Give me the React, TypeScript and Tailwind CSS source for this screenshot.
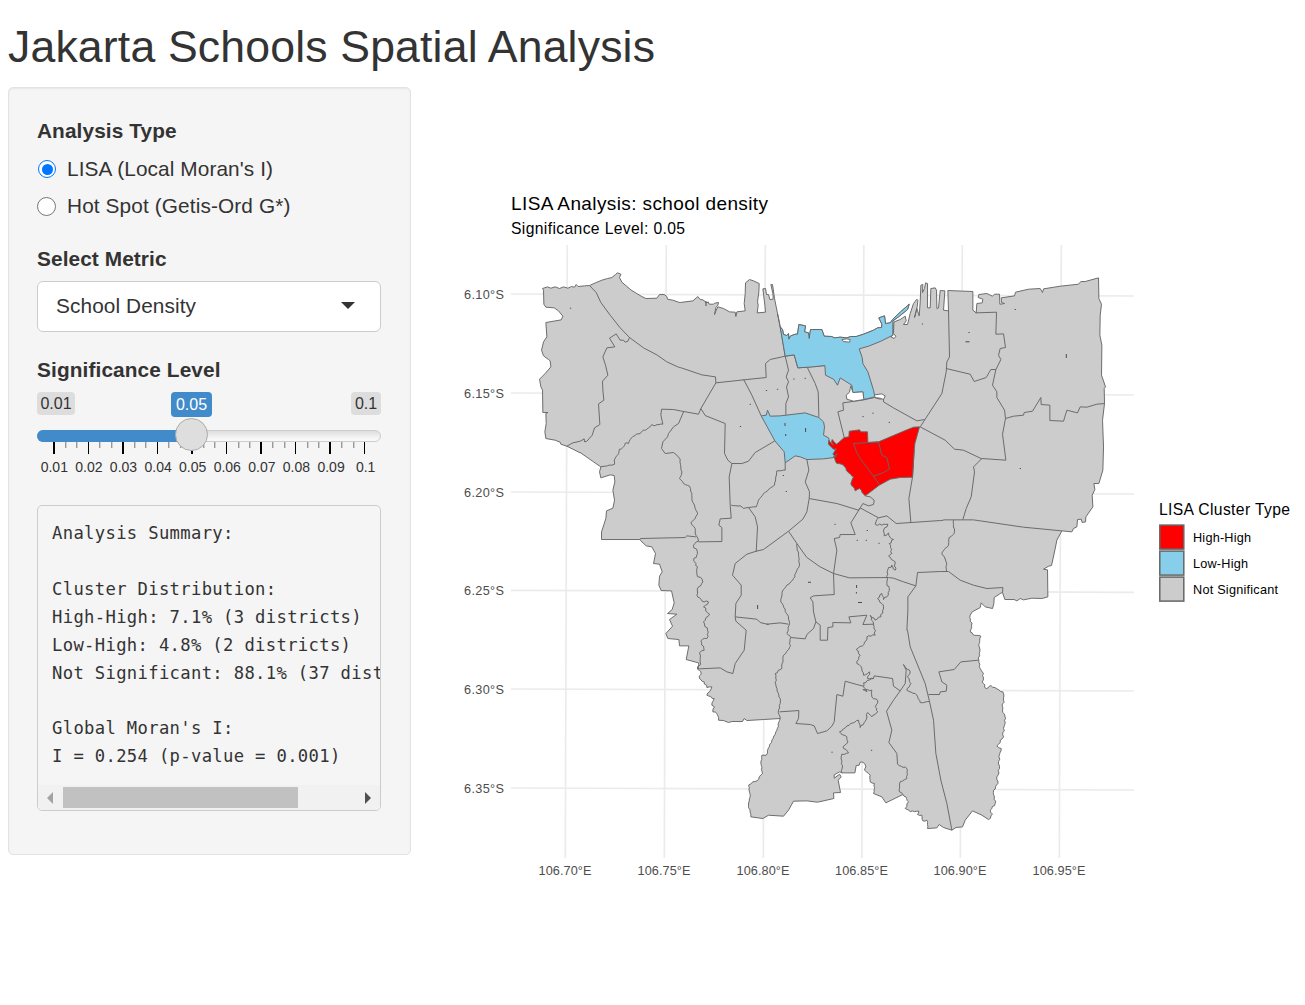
import React from "react";

/** Converts "x,y x,y" surveyed on a 3x sheet with the given origin to map points. */
type Pt = [number, number];
const sheet = (ox: number, oy: number, s: string): Pt[] =>
  s.trim().split(/\s+/).map((p) => {
    const [x, y] = p.split(",").map(Number);
    return [ox + x / 3, oy + y / 3];
  });
const NW = (s: string) => sheet(530.2, 260.2, s);
const N = (s: string) => sheet(680.2, 260.2, s);
const NM = (s: string) => sheet(820.2, 260.2, s);
const NE = (s: string) => sheet(960.2, 260.2, s);
const W = (s: string) => sheet(580.2, 450.2, s);
const C = (s: string) => sheet(760.2, 450.2, s);
const E = (s: string) => sheet(890.2, 500.2, s);
const S = (s: string) => sheet(730.2, 640.2, s);

const d = (pts: Pt[]) => "M" + pts.map((p) => p[0].toFixed(2) + " " + p[1].toFixed(2)).join("L");

/** Adds small bends along a line, for rivers and ragged borders. */
const bends = (pts: Pt[], amp: number): Pt[] => {
  const out: Pt[] = [pts[0]];
  let k = 0;
  for (let i = 1; i < pts.length; i++) {
    const [x0, y0] = pts[i - 1];
    const [x1, y1] = pts[i];
    const len = Math.hypot(x1 - x0, y1 - y0) || 1;
    const n = Math.max(1, Math.round(len / 2.2));
    for (let j = 1; j < n; j++) {
      k++;
      const o = amp * Math.sin(k * 2.3 + Math.cos(k * 1.7) * 2);
      out.push([x0 + ((x1 - x0) * j) / n - ((y1 - y0) / len) * o, y0 + ((y1 - y0) * j) / n + ((x1 - x0) / len) * o]);
    }
    out.push(pts[i]);
  }
  return out;
};

const outline: Pt[] = [
  ...NW("37,85 52,80 62,84 75,80 88,85 100,80 113,84 124,79 133,81 138,73 144,79 163,77 178,76 198,67 215,60 232,55 245,52 256,43 262,38 272,42 268,52 275,66 288,77 302,89 318,99 333,108 347,115 380,114 388,103 402,103 410,109 412,117 428,120 445,126"),
  ...N("0,127 38,122 53,109 60,118 68,119 80,128 84,125 87,132 100,132 103,129 115,127 113,135 107,142 103,163 108,150 113,140 130,145 148,155 165,156 167,169 170,155 195,152 192,130 195,100 196,68 208,58 220,62 237,70 236,95 232,125 234,135 231,158 256,156 254,135 248,86 256,85 259,103 265,103 269,118 279,117 278,100 272,73 277,73 283,115 292,160 300,200 307,208 310,223 320,226 325,220 326,237 330,228 345,222 352,222 356,193 376,197 373,215 385,218 387,235 391,208 425,208 432,228 455,229 462,233 480,231"),
  ...NM("80,233 92,229 108,229 130,222 160,210 172,203 184,202 185,192 176,173 193,167 196,190 210,188 218,177 240,156 267,132 262,148 235,170 218,182 218,225 212,230 222,235 227,228 220,220 221,190 222,185 240,178 255,168 258,182 250,193 262,193 270,160 280,130 290,117 293,120 291,140 283,172 290,145 297,167 300,125 302,75 308,73 307,97 313,85 316,68 322,70 322,143 330,143 332,85 345,83 349,90 350,145 355,143 360,91 374,92 370,150 385,152 383,91"),
  ...NE("38,94 38,150 48,158 50,130 66,128 68,117 54,112 56,103 80,100 97,108 103,102 118,102 119,132 133,130 124,127 123,113 163,107 166,96 205,87 240,85 247,97 250,86 300,78 355,72 362,64 375,64 415,53 416,115 424,132 420,165 419,225 425,255 424,345 436,380 432,385 433,430 427,480 430,560 428,630 416,670 401,670 404,688 396,705 398,740 377,770 376,785 366,787 363,777 352,778 350,800 340,805 335,815"),
  ...E("515,92 500,120 494,150 484,196 475,198 460,207 472,209 473,290 455,295 425,294 400,299 390,295 380,302 372,298 344,298 337,277 330,280 312,292 311,310 307,325 285,320 273,308 270,322 246,335"),
  ...bends([
    ...E("240,345 244,375 240,395 248,403 272,408 267,440 266,480"),
    ...S("750,85 760,100 756,125 768,145 782,136 800,146 818,155 820,180 817,210 826,235 820,265 820,290 800,317 813,325 806,350 808,385 800,410 803,430 790,450 795,490 780,510 787,522 775,538"),
  ], 0.8),
  ...S("755,525 727,512 705,540 697,560 677,562 665,570 640,562 627,553 620,563 592,565"),
  ...bends(S("592,565 590,540 578,542 575,525 562,523 566,513 540,514 525,505 535,485 527,470 518,463"), 0.6),
  ...S("467,488 455,470 430,460"),
  ...bends(S("430,460 433,430 420,425 420,405 403,390 407,380 400,367 390,366 387,375 378,376"), 0.5),
  ...S("374,398 335,398 328,395 312,404 312,414 328,402 333,410 324,420 331,457 310,458 311,475 262,486 230,482 190,483 175,510 160,528 115,525 98,535 62,530"),
  ...bends(S("62,530 55,495 60,470 55,435 68,425 80,422 97,400 92,370 95,345 108,345 125,300 140,270 150,235"), 0.5),
  ...W("550,808 500,811 492,805 487,814 455,814 445,817 430,811 415,810"),
  ...bends(W("415,810 410,790 398,785 403,770 395,765 402,745 380,735 395,710 380,712 372,695 358,685 362,665 352,657 355,638"), 0.8),
  ...W("318,628 326,587 298,587 296,568 263,565 257,550 277,528 268,508 290,492 262,490 276,478 282,458 274,422 243,421 236,405 238,378 246,365 238,342 220,340 226,310 215,290 198,287 182,272 180,268 64,268 64,245 77,205 79,182 98,174 103,150 98,120 104,95 102,76 90,74 62,83 58,65 62,50 40,35 0,7"),
  ...NW("150,578 110,558 92,552 90,546 75,540 47,535 44,515 48,490 47,460 53,457 38,457 37,390 32,380 28,357 45,340 62,320 60,302 55,298 40,287 34,270 40,245 50,230 47,187 93,179 98,168 85,152 72,143 47,141 41,132 40,90"),
];

const borders: Pt[][] = [
  [...NW("178,76 198,97 212,127 240,165 270,203 298,232 340,263 380,284 410,305 445,321"), ...N("0,322 65,344 106,350 107,368")],
  NW("298,232 293,243 285,246 280,240 270,240 258,221 238,234 254,260 230,263 218,290 226,315 233,345 217,363 218,390 221,420 205,431 209,493 193,503 186,525 170,543 163,545 162,536 150,543 128,548 110,558"),
  NW("394,447 392,465 398,492"),
  [...NW("394,447 430,448"), ...N("0,452 55,462 62,445 107,368")],
  bends([...NW("398,492 375,496 365,493 350,507 340,510 330,520 318,522 300,538 295,550 285,549 278,562 268,567 262,585 252,600"), ...W("103,42 95,45 75,48 62,50")], 0.6),
  NW("460,455 445,490 430,500 415,520 412,530 398,545 394,565 405,580 430,577 440,585 450,597"),
  bends(W("300,27 302,50 305,65 298,85 310,100 328,108 335,130 337,155 345,175 352,192 345,205 332,217 345,235 347,255 355,273"), 0.5),
  bends(W("355,273 340,285 352,310 340,330 352,350 350,372 368,395 355,410 350,435 372,455 385,455 370,470 388,492 370,515 382,540 380,565 362,572 372,600 358,608 360,635 355,657"), 1),
  [...N("62,445 75,466 135,490 133,580"), ...W("443,30 455,40 447,80 450,165 453,204 420,206 416,225 425,232 425,274 355,275")],
  N("107,368 190,359 258,352 256,310 270,298 315,288 342,284 353,323 434,316"),
  N("190,357 215,405 243,467"),
  N("292,160 300,200 307,240 315,288 325,330 318,350 325,365 319,380 325,410 317,430 317,466"),
  N("382,323 405,370 414,395 416,470"),
  [...N("284,542 225,577"), ...W("505,33 485,40 455,40")],
  bends(W("453,165 480,167 490,175 505,172 528,170 535,150 550,130 583,105 590,62 615,60"), 0.3),
  W("180,265 315,262 320,257 347,260"),
  W("505,172 525,200 532,230 528,305"),
  [...C("147,145 140,185 128,207 85,243 10,298"), ...W("528,303 500,312 465,340 457,375 483,405 483,435 467,460 465,500")],
  [...W("465,500 530,507 540,517 565,523"), ...C("20,522 60,518 85,522")],
  W("465,500 467,513 498,540 492,600 465,640 458,670 440,665 420,653 357,656"),
  C("75,38 75,60"),
  C("140,28 146,60 135,95 148,125 147,145"),
  C("147,145 230,160 295,180 300,173 355,203 380,197 408,220 540,211"),
  C("300,173 272,218 285,253 240,253 238,262 222,265 230,300 220,370 222,433 160,437 150,443 158,455 160,485 167,515 180,525 180,570 202,570 203,532 218,530 218,517 272,518 266,500 320,495 308,523 340,522"),
  C("85,243 110,280 140,322 180,350 220,370 268,383 385,382 400,384 430,395 467,407 472,367 540,364"),
  bends(C("110,280 118,345 100,385 68,420 62,455 85,500 88,520 80,550 92,562"), 0.5),
  C("92,562 135,566 140,553 160,535 167,515"),
  bends([...C("92,562 88,592"), ...S("160,45 155,85 135,100 138,140 150,175 145,210 150,235")], 0.7),
  [...C("467,407 443,440 443,480 440,540"), ...E("52,390 60,440 105,550"), ...S("598,184 610,240 617,340 632,420 650,490 665,570")],
  bends([
    ...C("355,203 345,222 365,225 383,222 370,240 372,257 385,248 390,262 400,268 387,280 395,310 385,318 405,335 405,360 395,345 383,358 380,400 387,415 380,440 370,448 365,430 352,445 365,460 370,470 362,500 345,510 330,495 340,522 345,555 320,560 312,582"),
    ...S("378,28 390,45 380,70 395,85 400,105 418,95 412,115 430,115"),
  ], 0.9),
  C("462,0 457,80 446,145 452,217"),
  C("330,140 342,150 340,163 325,167 308,160 300,173"),
  C("315,137 330,140"),
  NM("72,532 53,455 70,450 68,428 125,420 163,412 180,417 190,413"),
  NM("190,413 190,425 220,443 290,482 313,478"),
  NM("385,152 388,290 380,305 378,335 365,400 300,500 375,540 403,567 430,570 485,596"),
  [...NM("378,325 420,335"), ...NE("30,342 42,364 78,352 92,328 107,328")],
  NE("46,158 109,156 107,222 130,221 136,262 120,265 115,285 122,298 107,328 97,375 110,395 110,412 133,450 136,475 127,522 137,600 65,595"),
  NE("65,595 40,620 43,635 33,710 18,745 8,778"),
  NE("136,475 160,468 190,465 192,457 217,453 242,412 243,433 269,435 269,481 310,483 320,450 352,458 360,440 380,441 410,432 433,430"),
  E("150,62 162,59 250,59 400,81 515,92"),
  bends(E("190,60 192,100 177,112 175,135 155,158 168,185 169,213"), 0.5),
  E("150,214 175,214 210,240 250,255 290,265 338,262 337,277"),
  E("265,480 212,485 192,508 146,515 155,545 170,555 168,573 150,575 148,583 115,583"),
  S("520,73 528,90 525,130 510,152 490,180 469,213 485,270 476,307 500,340 502,372"),
  bends(S("502,372 530,385 530,415 510,425 508,455 518,463"), 0.6),
  bends(S("520,73 540,95 532,110 542,130 530,150 555,160 570,187 598,184"), 0.6),
  S("430,115 432,107 487,115 490,138 510,152"),
  S("400,138 380,133 345,123 338,168 320,163 312,245 305,258 290,272 262,280 252,257 240,253 197,250 205,235 206,211 148,215"),
  bends(S("430,115 400,128 400,140 410,155 398,148 425,150 425,170 443,182 435,200 443,215 425,230 412,217 405,243 390,262 385,240 350,257 328,275 350,290 353,305 338,320 355,338 335,342 335,398"), 0.7),
];

const lowHigh: Pt[][] = [
  [
    ...N("300,200 307,208 310,223 320,226 325,220 326,237 330,228 345,222 352,222 356,193 376,197 373,215 385,218 387,235 391,208 425,208 432,228 455,229 462,233 480,231"),
    ...NM("80,233 92,229 108,229 130,222 160,210 172,203 184,202 185,192 176,173 193,167 196,190 210,188 218,177 240,156 267,132 262,148 235,170 218,182 218,225 180,244 145,258 117,266 126,292 128,310 143,335 160,390 164,410 131,418 128,395 98,397 95,375 60,353 52,375 40,357 16,345 14,316"),
    ...N("400,320 353,323 342,284 315,288"),
  ],
  [
    ...N("243,467 258,465 262,450 270,468 300,467 375,458 416,472 430,485 433,500 430,525 445,533 450,550 460,565 470,575 460,590"),
    ...C("222,22 190,26 140,28 120,20 105,17 75,38 72,5"),
    ...N("284,542"),
  ],
];

const highHigh: Pt[] = [
  ...NM("298,500 280,501 260,509 175,545 143,547 142,515 122,515 118,509 87,513 86,530 72,532 50,552 44,548 36,538 34,545 40,555 25,541 25,552 40,567 48,566 38,582 47,590"),
  ...bends(C("230,10 222,20 230,40 250,45 262,65 280,80 272,100 285,122 298,115 315,137"), 0.5),
  ...C("357,105 390,87 420,82 457,81 462,0"),
  ...NM("284,550"),
];
const highInner: Pt[][] = [
  [...NM("100,550 110,578"), ...C("300,25 340,78 357,103")],
  NM("100,550 143,547 175,545"),
  [...NM("175,545 185,585 200,592"), ...C("388,57 370,67 340,78")],
];

const waters: Pt[][] = [
  NM("92,377 98,397 128,395 131,418 100,423 80,417 78,405 88,396 90,385"),
  NM("163,404 185,401 195,407 190,418 180,414 164,412"),
  NM("65,238 80,236 90,238 88,246 70,244"),
];

const specks = "570.5,308.2 750.3,404.3 740.4,426.5 766.4,390.5 777.5,389.3 793.8,379 805.2,378.3 863,416.6 873,413.2 889.3,422.4 922.4,324 969,332.5 1015.3,309.5 1020.3,468.5 783.3,475.5 786.3,491.5 835,524.3 867.3,530.5 857.3,540.3 866.3,540.3 879,543.3 871.5,750.3 832,752.2".split(" ");
const marks = ["M785 423v3", "M785.7 434v2", "M805.6 428v4", "M757.6 605v4", "M856.6 585v3", "M856.4 592v1.5", "M858 602.5h4", "M808 582.3h3", "M965.5 341.8h4", "M1066.3 354v4", "M706 301v5"];

const lats = [["6.10°S", 294], ["6.15°S", 393], ["6.20°S", 492], ["6.25°S", 590.3], ["6.30°S", 689], ["6.35°S", 788]] as const;
const lons = [["106.70°E", 565], ["106.75°E", 664], ["106.80°E", 763], ["106.85°E", 861.5], ["106.90°E", 960], ["106.95°E", 1059]] as const;
const legend = [["High-High", "#ff0000", 58], ["Low-High", "#87ceeb", 55], ["Not Significant", "#cccccc", 85]] as const;

function LisaMap() {
  return (
    <svg className="block h-[800px] w-[855px] font-['Liberation_Sans',sans-serif]" viewBox="450 87 855 800">
      <text x="511" y="210" fontSize="19" textLength="257">LISA Analysis: school density</text>
      <text x="511" y="234" fontSize="15.7" textLength="174">Significance Level: 0.05</text>
      <g stroke="#ebebeb" strokeWidth="1.7">
        {lats.map(([t, y]) => <path key={t} d={`M511 ${y}L1134 ${y + 2}`} />)}
        {lons.map(([t, x]) => <path key={t} d={`M${x + 2.3} 245L${x + 0.3} 858`} />)}
      </g>
      <g fontSize="12.7" fill="#4d4d4d">
        {lats.map(([t, y]) => <text key={t} x="464" y={y + 5} textLength="40">{t}</text>)}
        {lons.map(([t, x]) => <text key={t} x={x - 26.5} y="875" textLength="53">{t}</text>)}
      </g>
      <g stroke="#666666" strokeWidth="0.95" strokeLinejoin="round" fill="none">
        <path d={d(outline) + "Z"} fill="#cccccc" />
        {borders.map((b, i) => <path key={i} d={d(b)} />)}
        {lowHigh.map((b, i) => <path key={i} d={d(b) + "Z"} fill="#87ceeb" />)}
        <path d={d(highHigh) + "Z"} fill="#ff0000" />
        {highInner.map((b, i) => <path key={i} d={d(b)} />)}
        {waters.map((b, i) => <path key={i} d={d(b) + "Z"} fill="#ffffff" />)}
        {marks.map((m) => <path key={m} d={m} stroke="#444444" />)}
      </g>
      {specks.map((p) => {
        const [x, y] = p.split(",").map(Number);
        return <rect key={p} x={x - 0.6} y={y - 0.5} width="1.3" height="1" fill="#555555" />;
      })}
      <text x="1159" y="515" fontSize="15.7" textLength="131">LISA Cluster Type</text>
      {legend.map(([t, c, w], i) => (
        <g key={t}>
          <rect x="1159.8" y={525.1 + i * 26} width="24" height="24" fill={c} stroke="#666666" strokeWidth="1.5" />
          <text x="1193" y={542 + i * 26} fontSize="12.7" textLength={w}>{t}</text>
        </g>
      ))}
    </svg>
  );
}

const ticks = ["0.01", "0.02", "0.03", "0.04", "0.05", "0.06", "0.07", "0.08", "0.09", "0.1"];

function Slider() {
  return (
    <div className="relative h-[84px] w-[344px]">
      <div className="flex h-6 justify-between text-[16px] leading-[24px]">
        <span className="h-[23px] w-[38px] rounded bg-[#dddddd] text-center">0.01</span>
        <span className="h-[23px] w-[30px] rounded bg-[#dddddd] text-center">0.1</span>
      </div>
      <div className="mt-[14px] h-3 rounded-full border border-[#cccccc] bg-gradient-to-b from-[#dedede] to-[#f8f8f8] to-80%" />
      <svg className="block h-3 w-[344px]" viewBox="0 0 344 12">
        {Array.from({ length: 28 }, (_, i) => {
          const x = 17 + i * 11.52;
          return i % 3 === 0
            ? <rect key={i} x={Math.floor(x - 0.5)} y="0" width={i % 2 ? 1 : 2} height="12" fill="#000" />
            : <rect key={i} x={Math.floor(x - 0.3)} y="0" width="1.4" height="6" fill="#999" />;
        })}
      </svg>
      <div className="mt-[4px] flex w-[346px] text-[14px] leading-[18px]">
        {ticks.map((t) => <span key={t} className="w-[34.6px] shrink-0 text-center">{t}</span>)}
      </div>
      <div className="absolute left-0 top-[38px] h-3 w-[150px] rounded-l-full bg-[#428bca]" />
      <div className="absolute left-[134px] top-0 h-[25px] w-[41px] rounded bg-[#428bca] text-center text-[16px] leading-[25px] text-white">0.05</div>
      <div className="absolute left-[138px] top-[26px] h-[33px] w-[33px] rounded-full border border-[#ababab] bg-[#dedede]" />
    </div>
  );
}

const summary = `Analysis Summary:

Cluster Distribution:
High-High: 7.1% (3 districts)
Low-High: 4.8% (2 districts)
Not Significant: 88.1% (37 districts)

Global Moran's I:
I = 0.254 (p-value = 0.001)`;

export default function App() {
  return (
    <div className="h-[1005px] w-[1305px] overflow-hidden bg-white font-['Liberation_Sans',sans-serif] text-[#333333]">
      <h1 className="ml-2 h-[87px] whitespace-nowrap pt-[22px] text-[44.6px] leading-[50px] tracking-[0.16px]">Jakarta Schools Spatial Analysis</h1>
      <div className="flex">
        <aside className="ml-2 h-[768px] w-[403px] shrink-0 rounded-[5px] border border-[#e3e3e3] bg-[#f5f5f5] px-7 pt-7 text-[20.8px] leading-[30px] shadow-[inset_0_1px_2px_rgba(0,0,0,0.06)]">
          <div className="font-bold tracking-[0.1px]">Analysis Type</div>
          <label className="mt-2 flex h-[30px] items-center tracking-[0.1px]">
            <span className="ml-[1px] mr-[11px] flex size-[18px] items-center justify-center rounded-full border-[1.6px] border-[#0075ff] bg-white"><span className="size-[11px] rounded-full bg-[#0075ff]" /></span>
            LISA (Local Moran's I)
          </label>
          <label className="mt-[7px] flex h-[30px] items-center tracking-[0.12px]">
            <span className="mr-[11px] size-[19px] rounded-full border border-[#767676] bg-white" />
            Hot Spot (Getis-Ord G*)
          </label>
          <div className="mt-[23px] font-bold tracking-[0.1px]">Select Metric</div>
          <div className="mt-[7px] flex h-[51px] w-[344px] items-center justify-between rounded-[6px] border border-[#cccccc] bg-white pb-[2px] pl-[18px] pr-[25px] tracking-[0.1px]">
            School Density
            <svg className="h-[7px] w-[14px]" viewBox="0 0 14 7"><path d="M0 0h14L7 7z" fill="#333" /></svg>
          </div>
          <div className="mb-[7px] mt-[23px] font-bold tracking-[0.12px]">Significance Level</div>
          <Slider />
          <div className="mt-[29px] h-[306px] w-[344px] overflow-hidden rounded-[5px] border border-[#cccccc]">
            <pre className="h-[279px] overflow-hidden pl-[14px] pt-[14px] font-['DejaVu_Sans_Mono',monospace] text-[17.2px] leading-[27.9px] tracking-[0.34px]">{summary}</pre>
            <div className="flex h-[25px] items-center bg-[#f1f1f1] px-[9px]">
              <svg className="h-3 w-[6px]" viewBox="0 0 6 12"><path d="M6 0v12L0 6z" fill="#a3a3a3" /></svg>
              <div className="ml-[10px] h-[21px] w-[235px] bg-[#c1c1c1]" />
              <svg className="ml-auto h-3 w-[6px]" viewBox="0 0 6 12"><path d="M0 0v12l6-6z" fill="#505050" /></svg>
            </div>
          </div>
        </aside>
        <main className="ml-[39px]"><LisaMap /></main>
      </div>
    </div>
  );
}
